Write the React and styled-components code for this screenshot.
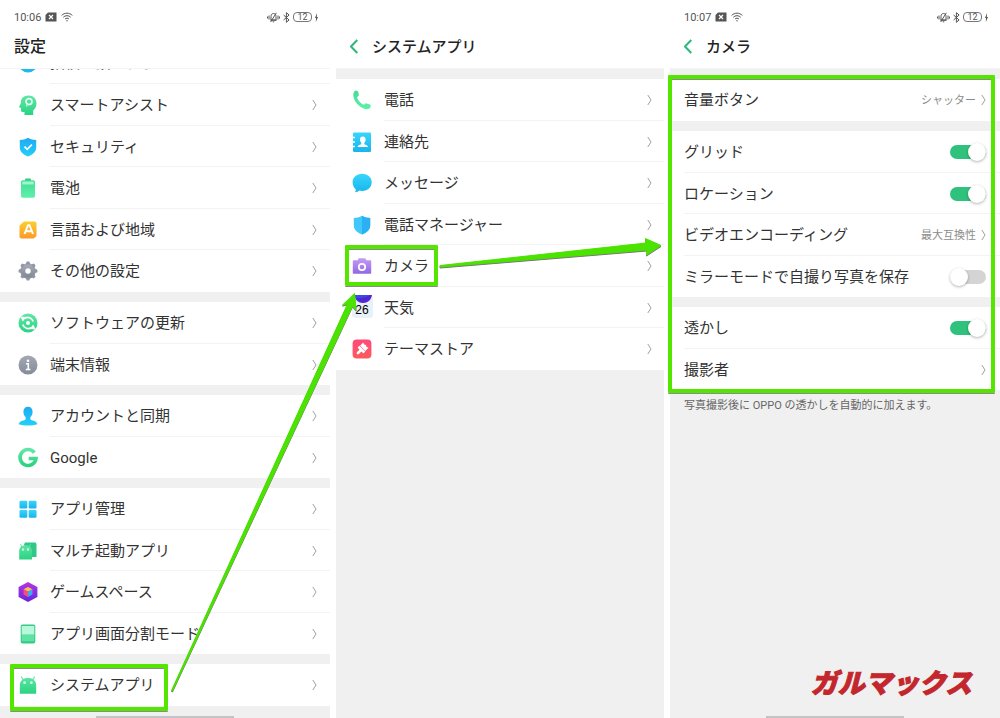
import React, { useState } from "react";
import styled, { createGlobalStyle } from "styled-components";

const GlobalStyle = createGlobalStyle`
  * {
    box-sizing: border-box;
  }
  body {
    margin: 0;
    background: #fff;
    color: #333;
    font-family: Roboto, "Noto Sans CJK JP", sans-serif;
  }
`;

/* gradients shared by the icons */
const gradients = {
  green: ["#5fe6a6", "#2bd382"],
  mint: ["#41dd95", "#5ff0aa"],
  blue: ["#1fa9f3", "#22d0fa"],
  sky: ["#38d6fb", "#18b4ee"],
  orange: ["#fbcf2f", "#fa9a2b"],
  grey: ["#a4a8b4", "#868b99"],
  violet: ["#c79bf5", "#8f68e4"],
  purple: ["#b434e8", "#6a25d8"],
  rose: ["#ff4a7a", "#fb5a5c"],
};

const GradientDefs = () => (
  <HiddenSvg aria-hidden="true">
    <defs>
      {Object.entries(gradients).map(([name, [from, to]]) => (
        <linearGradient key={name} id={name} x1="0" y1="0" x2="0" y2="1">
          <stop offset="0" stopColor={from} />
          <stop offset="1" stopColor={to} />
        </linearGradient>
      ))}
    </defs>
  </HiddenSvg>
);

const icons = {
  privacy: <circle cx="10" cy="10" r="9.5" fill="#1fb9ee" />,
  assist: (
    <>
      <path
        d="M10.5.5C5.6.5 2.8 3.6 2.8 7.6c0 1.2-.3 1.9-1.2 3.2-.6.9-.7 1.5.2 1.8l1.2.4v2.6c0 1 .5 1.4 1.5 1.4h2v3h8.7v-4.6c2-1.7 3.3-4 3.3-7C18.5 3.6 15.2.5 10.5.5z"
        fill="url(#green)"
      />
      <circle cx="11" cy="6.6" r="3" fill="none" stroke="#e4fff2" strokeWidth="1.7" />
      <path d="M9.3 9.2l-1 2.2" stroke="#c9f8e2" strokeWidth="1.2" />
    </>
  ),
  security: (
    <>
      <path
        d="M10 .8c2.6 1.5 5.2 2.1 8.2 2.2v7.4c0 4.4-3.6 7.3-8.2 9-4.6-1.7-8.2-4.6-8.2-9V3C4.8 2.9 7.4 2.3 10 .8z"
        fill="url(#blue)"
      />
      <path
        d="M6.5 9.7l2.7 2.7 4.7-4.8"
        fill="none"
        stroke="#fff"
        strokeWidth="1.7"
      />
    </>
  ),
  battery: (
    <>
      <rect x="7" y=".5" width="6" height="3" rx="1" fill="#35c984" />
      <rect x="3" y="2.2" width="14" height="17.5" rx="1.6" fill="url(#mint)" />
      <rect x="4.2" y="3.5" width="11.6" height="3" rx=".6" fill="#9cf5cb" />
    </>
  ),
  language: (
    <>
      <path
        d="M6 1.5h10.5a2 2 0 0 1 2 2V16l-2.8 2.5H3.5a2 2 0 0 1-2-2V5.5z"
        fill="url(#orange)"
      />
      <path
        d="M6.5 14L10 5.2h1.5L15 14M8 11.2h5.5"
        fill="none"
        stroke="#fff"
        strokeWidth="1.9"
      />
    </>
  ),
  gear: (
    <>
      <circle cx="10" cy="10" r="5.2" fill="none" stroke="url(#grey)" strokeWidth="5" />
      {[0, 45, 90, 135, 180, 225, 270, 315].map((angle) => (
        <path
          key={angle}
          d="M7.7 3.5l1-2.9h2.6l1 2.9z"
          fill="#9095a2"
          transform={`rotate(${angle} 10 10)`}
        />
      ))}
    </>
  ),
  update: (
    <>
      <circle cx="10" cy="10" r="9.5" fill="url(#green)" />
      <path
        d="M4.8 11.5a5.5 5.5 0 0 0 8.6 3M15.2 8.5a5.5 5.5 0 0 0-8.6-3"
        fill="none"
        stroke="#fff"
        strokeWidth="1.7"
      />
      <path d="M2.3 3.6l6 .3-3.5 4.5zM17.7 16.4l-6-.3 3.5-4.5z" fill="#fff" />
      <circle cx="10" cy="10" r="2" fill="#fff" />
    </>
  ),
  info: (
    <>
      <circle cx="10" cy="10" r="9.5" fill="url(#grey)" />
      <circle cx="10" cy="5.7" r="1.3" fill="#fff" />
      <path
        d="M8 8.7h2.3v5.6M7.8 14.5h4.6"
        fill="none"
        stroke="#fff"
        strokeWidth="1.6"
      />
    </>
  ),
  account: (
    <path
      d="M10 .8c3 0 4.6 2.1 4.6 4.900 0 2.400-1 4.400-2.200 5.400v1.800c0 .8.7 1.200 2.200 1.600 2.600.7 4.300 1.700 4.900 3.800-5.500 1.600-13.500 1.600-19 0 .6-2.100 2.300-3.100 4.900-3.800 1.500-.4 2.200-.8 2.200-1.600v-1.800c-1.200-1-2.200-3-2.200-5.400C5.400 2.900 7 .8 10 .8z"
      fill="url(#blue)"
    />
  ),
  google: (
    <path
      d="M16.400 4.600A8 8 0 1 0 18 10.500h-7.300"
      fill="none"
      stroke="url(#green)"
      strokeWidth="3.6"
    />
  ),
  apps: (
    <g fill="url(#sky)">
      <rect x="1.5" y="1.7" width="7.8" height="7.8" rx="1.3" />
      <rect x="10.7" y="1.7" width="7.8" height="7.8" rx="1.3" />
      <rect x="1.5" y="10.9" width="7.8" height="7.8" rx="1.3" />
      <rect x="10.7" y="10.9" width="7.8" height="7.8" rx="1.3" />
    </g>
  ),
  clone: (
    <>
      <path d="M6 3.5l1-2h10.5l1 1.5V16H9z" fill="#2fc987" />
      <path
        d="M1.2 18.5V10c0-2 .8-3.5 2.1-4.5L2 3.5l.8-.4 1.4 1.8c1.6-.9 5.2-.9 6.700 0l1.400-1.800.8.4-1.300 2c1.300 1 2.200 2.500 2.200 4.500v8.500z"
        fill="url(#green)"
      />
      <circle cx="5" cy="8.5" r="1.2" fill="#c4fbe0" />
      <circle cx="10" cy="8.5" r="1.2" fill="#c4fbe0" />
    </>
  ),
  game: (
    <>
      <path d="M10 0l9.4 5v10L10 20 .6 15V5z" fill="url(#purple)" />
      <path d="M10 5l4.5 2.3L10 9.7 5.5 7.3z" fill="#ffc04a" />
      <path d="M5.5 7.3L10 9.7V15l-4.5-2.5z" fill="#f0507c" />
      <path d="M14.5 7.3L10 9.7V15l4.5-2.5z" fill="#37a9f5" />
    </>
  ),
  split: (
    <>
      <rect x="2.7" y=".5" width="14.6" height="19" rx="1.8" fill="#36c987" />
      <rect x="3.7" y="2" width="12.6" height="8.7" fill="#b7f8da" />
      <rect x="3.7" y="10.7" width="12.6" height="6.5" fill="#5ee3a4" />
    </>
  ),
  android: (
    <>
      <path
        d="M1.8 18.7v-8.5c0-2.3 1-4.2 2.7-5.500L2.800 1.800l.8-.5 1.900 2.600c2.200-1.200 6.800-1.200 9 0l1.900-2.600.8.5-1.700 2.900c1.700 1.300 2.700 3.200 2.700 5.500v8.500z"
        fill="url(#green)"
      />
      <circle cx="6.6" cy="7.7" r="1.4" fill="#c4fbe0" />
      <circle cx="13.4" cy="7.7" r="1.4" fill="#c4fbe0" />
    </>
  ),
  phone: (
    <path
      d="M3.3.5L6 1.3c.6 1.7.8 3 .8 4.4L5 7.200c1 3.400 3.500 6 6.800 7.500l2-1.500c1.700.3 3.400.9 4.900 1.900l-.3 2.700c-1.300 1.300-3.400 1.700-5.500 1.100C6.600 17.100 1.800 11.500 1.300 5.600c-.2-2 .5-4 2-5.100z"
      fill="url(#mint)"
    />
  ),
  contacts: (
    <>
      <rect x="1" y=".5" width="18" height="19.5" rx="1.2" fill="url(#sky)" />
      <path d="M0 5.5h3M0 10h3M0 14.5h3" stroke="#fff" strokeWidth="1.3" />
      <path
        d="M10.8 4.5c1.9 0 2.8 1.3 2.8 3 0 1.5-.6 2.6-1.3 3.200v1.200c.3.9 3.500.7 3.700 3H5.600c.2-2.300 3.400-2.100 3.700-3v-1.200C8.600 10.100 8 9 8 7.500c0-1.700.9-3 2.800-3z"
        fill="#fff"
      />
    </>
  ),
  message: (
    <path
      d="M10.2.8c5.5 0 9.5 3.6 9.5 8.5s-4 8.6-9.5 8.6c-1 0-2-.1-2.800-.3-1.100 1-2.800 1.700-4.400 1.700.6-.9.9-2.100.8-3C1.800 14.700.6 12.200.6 9.300.6 4.400 4.700.8 10.200.8z"
      fill="url(#sky)"
    />
  ),
  manager: (
    <>
      <path
        d="M10 .8c2.6 1.5 5.2 2.1 8.2 2.2v7.4c0 4.4-3.6 7.3-8.2 9-4.6-1.7-8.2-4.6-8.2-9V3C4.8 2.9 7.4 2.3 10 .8z"
        fill="#40c8fb"
      />
      <path
        d="M10 .8c2.6 1.5 5.2 2.1 8.2 2.2v7.4c0 4.4-3.6 7.3-8.2 9z"
        fill="#2cb0f4"
      />
    </>
  ),
  camera: (
    <>
      <path
        d="M1.8 4.2h3.7l1.3-2h6.4l1.3 2h3.7c.7 0 1 .4 1 1v11.6c0 .7-.4 1-1 1H1.8c-.7 0-1-.4-1-1V5.2c0-.6.3-1 1-1z"
        fill="url(#violet)"
      />
      <circle cx="10" cy="11" r="3.2" fill="none" stroke="#fff" strokeWidth="1.7" />
    </>
  ),
  weather: (
    <>
      <rect y="-3" width="21" height="23" rx="3" fill="#e9f1f8" />
      <path d="M2.5-3H20c-.8 5-4.3 8-9 8S3.200 2 2.500-3z" fill="#5125d2" />
      <path d="M2.5-3H18c-3 2.500-10 3.500-14.500 3z" fill="#3a4be8" />
      <text
        x="10"
        y="16"
        textAnchor="middle"
        fontFamily="'Liberation Sans Narrow', 'Liberation Sans', sans-serif"
        fontSize="12"
      >
        26
      </text>
    </>
  ),
  theme: (
    <>
      <rect x=".6" y=".6" width="18.8" height="18.8" rx="4" fill="url(#rose)" />
      <g transform="rotate(45 10 10)" fill="#fff">
        <path d="M6.3 4.5l2 .8 1.700-1 1.700 1 2-.8V9H6.300z" />
        <path d="M5.8 9.5h8.400v1.700c0 .7-.4 1-1 1h-1.900v3.500a1.300 1.300 0 0 1-2.600 0v-3.500H6.800c-.6 0-1-.3-1-1z" />
      </g>
    </>
  ),
};

const settingsGroups = [
  [
    { icon: "assist", label: "スマートアシスト" },
    { icon: "security", label: "セキュリティ" },
    { icon: "battery", label: "電池" },
    { icon: "language", label: "言語および地域" },
    { icon: "gear", label: "その他の設定" },
  ],
  [
    { icon: "update", label: "ソフトウェアの更新" },
    { icon: "info", label: "端末情報" },
  ],
  [
    { icon: "account", label: "アカウントと同期" },
    { icon: "google", label: "Google" },
  ],
  [
    { icon: "apps", label: "アプリ管理" },
    { icon: "clone", label: "マルチ起動アプリ" },
    { icon: "game", label: "ゲームスペース" },
    { icon: "split", label: "アプリ画面分割モード" },
  ],
  [{ icon: "android", label: "システムアプリ", marked: "wide" }],
];

const systemApps = [
  { icon: "phone", label: "電話" },
  { icon: "contacts", label: "連絡先" },
  { icon: "message", label: "メッセージ" },
  { icon: "manager", label: "電話マネージャー" },
  { icon: "camera", label: "カメラ", marked: "narrow" },
  { icon: "weather", label: "天気" },
  { icon: "theme", label: "テーマストア" },
];

const Chevron = () => (
  <ChevronSvg viewBox="0 0 5 12" aria-hidden="true">
    <path d="M.8 1L4 6 .8 11" />
  </ChevronSvg>
);

const StatusBar = ({ time }) => (
  <StatusRow>
    {time && (
      <>
        <span>{time}</span>
        <svg width="12" height="10" viewBox="0 0 12 10">
          <path d="M3 .5h8.5v9H.5V3z" fill="#555" />
          <path d="M4 3l4 4M8 3L4 7" stroke="#fff" strokeWidth="1.2" />
        </svg>
        <svg width="12" height="10" viewBox="0 0 12 10" fill="none" stroke="#555">
          <path d="M.6 3.5C3.5.4 8.500.4 11.400 3.500M2.300 5.300c2-2.100 5.400-2.100 7.400 0M4 7.100c1-1.200 3-1.200 4 0" />
          <circle cx="6" cy="8.7" r=".7" fill="#555" stroke="none" />
        </svg>
        <StatusRight>
          <svg width="13" height="11" viewBox="0 0 13 11" fill="none" stroke="#555">
            <path d="M4 8V4.5C4 2.5 5 1.5 6.5 1.5S9 2.5 9 4.5V8zM3.3 8.2h6.4M5.7 9.8h1.6M9.3.8L3.7 10M2 3.5v4M11 3.5v4M.5 4.5v2M12.5 4.5v2" />
          </svg>
          <svg width="7" height="11" viewBox="0 0 7 11" fill="none" stroke="#555">
            <path d="M.6 3l5.5 5L3.4 10.3V.7L6.1 3 .6 8" />
          </svg>
          <Battery>12</Battery>
          <svg width="3" height="9" viewBox="0 0 3 9" fill="#555">
            <path d="M2 0L0 5h1L.8 9 3 4H1.8z" />
          </svg>
        </StatusRight>
      </>
    )}
  </StatusRow>
);

const BackButton = () => (
  <Back type="button" aria-label="戻る">
    <svg width="9" height="15" viewBox="0 0 9 15">
      <path d="M7.3 1L1 7.5 7.3 14" fill="none" stroke="#2fb87c" strokeWidth="2" />
    </svg>
  </Back>
);

const LinkRow = ({ icon, label, value, marked }) => (
  <Row as="a" href="#">
    {icon && (
      <IconSvg viewBox="0 0 20 20" aria-hidden="true">
        {icons[icon]}
      </IconSvg>
    )}
    <RowBody>
      <Label>{label}</Label>
      {value && <Value>{value}</Value>}
      <Chevron />
    </RowBody>
    {marked && <RowMark $wide={marked === "wide"} />}
  </Row>
);

const SwitchRow = ({ label, on }) => {
  const [checked, setChecked] = useState(on);

  return (
    <Row as="label">
      <RowBody>
        <Label>{label}</Label>
        <Switch
          type="checkbox"
          role="switch"
          checked={checked}
          onChange={(e) => setChecked(e.target.checked)}
        />
      </RowBody>
    </Row>
  );
};

const App = () => {
  return (
    <Page>
      <GlobalStyle />
      <GradientDefs />

      <Screen>
        <Header>
          <StatusBar time="10:06" />
          <TitleRow>
            <Title $large>設定</Title>
          </TitleRow>
        </Header>
        <Groups $start={18} $end={13}>
          <ScrolledGroup>
            <LinkRow icon="privacy" label="指紋、顔およびパスワード" />
          </ScrolledGroup>
          {settingsGroups.map((group, index) => (
            <Group key={index} $joined={index === 0}>
              {group.map((item) => (
                <LinkRow key={item.label} {...item} />
              ))}
            </Group>
          ))}
        </Groups>
        <HomeBar />
      </Screen>

      <Screen>
        <Header>
          <StatusBar />
          <TitleRow>
            <BackButton />
            <Title>システムアプリ</Title>
          </TitleRow>
        </Header>
        <Groups $start={16} $end={12}>
          <Group>
            {systemApps.map((item) => (
              <LinkRow key={item.label} {...item} />
            ))}
          </Group>
        </Groups>
      </Screen>

      <Screen>
        <Header>
          <StatusBar time="10:07" />
          <TitleRow>
            <BackButton />
            <Title>カメラ</Title>
          </TitleRow>
        </Header>
        <Groups $start={14} $end={14}>
          <Group>
            <LinkRow label="音量ボタン" value="シャッター" />
          </Group>
          <Group>
            <SwitchRow label="グリッド" on />
            <SwitchRow label="ロケーション" on />
            <LinkRow label="ビデオエンコーディング" value="最大互換性" />
            <SwitchRow label="ミラーモードで自撮り写真を保存" on={false} />
          </Group>
          <Group>
            <SwitchRow label="透かし" on />
            <LinkRow label="撮影者" />
          </Group>
          <GroupsMark />
        </Groups>
        <Note>写真撮影後に OPPO の透かしを自動的に加えます。</Note>
        <Brand>ガルマックス</Brand>
        <HomeBar />
      </Screen>

      <Arrows viewBox="0 0 1000 718" preserveAspectRatio="none" aria-hidden="true">
        <path d="M171.5 690.5L347.5 304l-5 1L354.500 293.500l1.500 16.500-3.500-4L172.500 691z" />
        <path d="M440 265.5L646 243l-.5-4.500 15.500 7-14.500 9.500.5-5-207 17z" />
      </Arrows>
    </Page>
  );
};

const Page = styled.main`
  position: relative;
  display: grid;
  grid-template-columns: 330fr 328fr 330fr;
  gap: 6px;
  min-height: 100vh;
`;

const Screen = styled.section`
  display: flex;
  flex-direction: column;
  min-width: 0;
  background: #f0f0f0;
`;

const Header = styled.header`
  height: 69px;
  padding: 8px 12px 0 14px;
  background: #fff;
  border-bottom: 1px solid #f4f4f4;
`;

const StatusRow = styled.div`
  display: flex;
  align-items: center;
  gap: 4px;
  height: 18px;
  font-size: 11px;
  color: #555;
`;

const StatusRight = styled.div`
  display: flex;
  align-items: center;
  gap: 3px;
  margin-left: auto;
`;

const Battery = styled.span`
  width: 19px;
  height: 10px;
  border: 1px solid #777;
  border-radius: 4px;
  font-size: 9px;
  line-height: 9px;
  text-align: center;
`;

const TitleRow = styled.div`
  display: flex;
  align-items: center;
  height: 41px;
`;

const Title = styled.h1`
  margin: 0;
  font-size: ${({ $large }) => ($large ? 16 : 15)}px;
  font-weight: 500;
  line-height: 24px;
  color: #222;
`;

const Back = styled.button`
  display: flex;
  width: 22px;
  padding: 0;
  border: 0;
  background: none;
`;

const Group = styled.div`
  margin-top: ${({ $joined }) => ($joined ? 0 : 10)}px;
  background: #fff;
`;

/* row that has been scrolled half way under the header */
const ScrolledGroup = styled.div`
  display: flex;
  align-items: flex-end;
  height: 15px;
  overflow: hidden;
  background: #fff;

  > * {
    flex: 1;
  }
`;

const RowBody = styled.span`
  display: flex;
  flex: 1;
  align-items: center;
  align-self: stretch;
  min-width: 0;
  padding-top: 1px;
  border-bottom: 1px solid #f3f3f3;
`;

const Row = styled.div`
  position: relative;
  display: flex;
  flex-shrink: 0;
  align-items: center;
  gap: 12px;
  height: 42px;
  color: inherit;
  text-decoration: none;

  &:nth-child(even) {
    height: 41px;
  }

  ${Group} > &:last-child > ${RowBody} {
    border-bottom-color: transparent;
  }
`;

const Groups = styled.div`
  position: relative;

  ${Row} {
    padding-left: ${({ $start }) => $start}px;
  }
  ${RowBody} {
    padding-right: ${({ $end }) => $end}px;
  }
`;

const IconSvg = styled.svg`
  flex-shrink: 0;
  width: 20px;
  height: 20px;
  overflow: visible;
`;

const Label = styled.span`
  flex: 1;
  font-size: 15px;
  line-height: 22px;
  white-space: nowrap;
`;

const Value = styled.span`
  margin-right: 5px;
  padding-top: 1px;
  font-size: 11px;
  line-height: 16px;
  color: #8c8c8c;
`;

const ChevronSvg = styled.svg`
  width: 5px;
  height: 12px;
  fill: none;
  stroke: #a0a0a0;
`;

const Switch = styled.input`
  appearance: none;
  display: flex;
  align-items: center;
  width: 36px;
  height: 14px;
  margin: 0;
  border-radius: 7px;
  background: linear-gradient(to right, transparent 4px, #d4d4d4 4px);

  &::before {
    content: "";
    width: 18px;
    height: 18px;
    flex-shrink: 0;
    border-radius: 50%;
    background: #fff;
    box-shadow: 0 1px 3px rgba(0, 0, 0, 0.3);
  }

  &:checked {
    justify-content: flex-end;
    background: #2fc27d;
  }
`;

const Mark = styled.span`
  position: absolute;
  border: 4px solid #55e600;
  border-radius: 1px;
  box-shadow: 0 1px 0 #8a8a8a, inset 0 1px 0 #8a8a8a;
  pointer-events: none;
`;

const RowMark = styled(Mark)`
  top: 0;
  bottom: ${({ $wide }) => ($wide ? -5 : 1)}px;
  left: ${({ $wide }) => ($wide ? 10 : 9)}px;
  width: ${({ $wide }) => ($wide ? 158 : 93)}px;
`;

const GroupsMark = styled(Mark)`
  inset: 6px 5px -3px -2px;
`;

const Note = styled.p`
  margin: 8px 14px;
  font-size: 11px;
  line-height: 16px;
  color: #666;
`;

const Brand = styled.div`
  margin: auto 28px 16px auto;
  font-size: 27px;
  font-style: italic;
  font-weight: 900;
  line-height: 32px;
  color: #c3272d;
  -webkit-text-stroke: 1px #c3272d;
`;

const HomeBar = styled.div`
  width: 42%;
  height: 2px;
  margin: auto auto 0;
  background: #c4c4c4;

  ${Brand} + & {
    margin-top: 0;
  }
`;

const HiddenSvg = styled.svg`
  position: absolute;
  width: 0;
  height: 0;
`;

const Arrows = styled.svg`
  position: absolute;
  inset: 0;
  width: 100%;
  height: 100%;
  fill: #4be300;
  stroke: #4be300;
  stroke-linejoin: round;
  filter: drop-shadow(0 1px 0 #777);
  pointer-events: none;
`;

export default App;
